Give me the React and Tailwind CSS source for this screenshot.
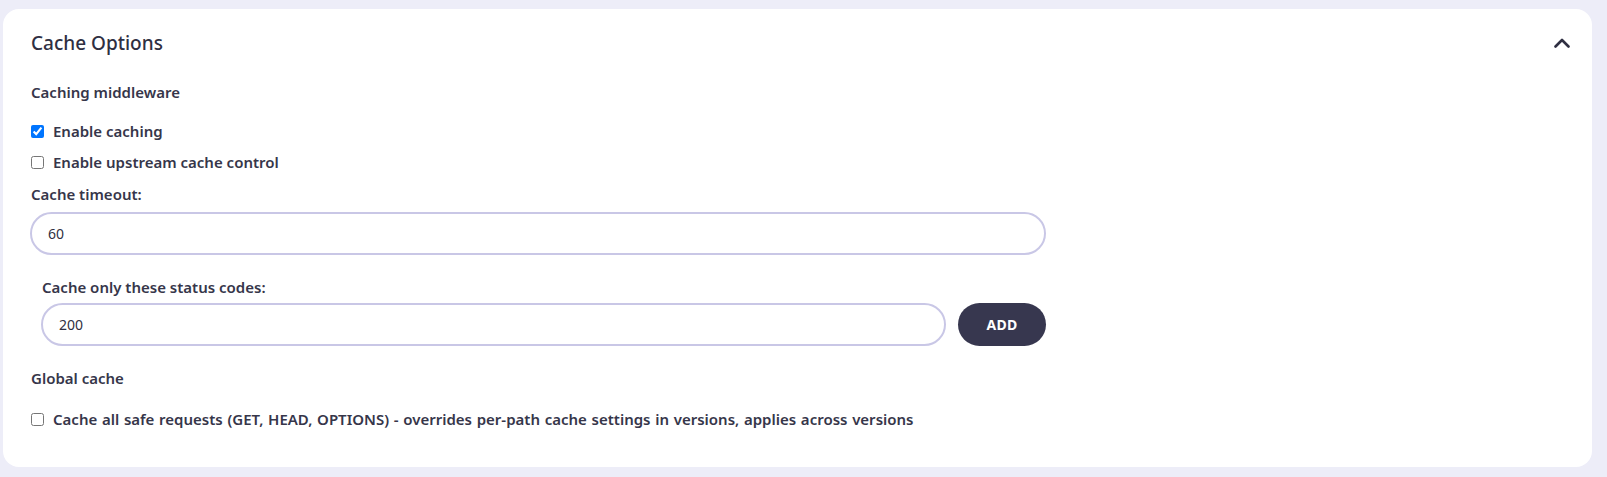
import React, { useState } from 'react'

const font = { fontFamily: '"Noto Sans", "Open Sans", sans-serif' }

const CheckRow = ({ checked, onChange, children, className = '' }) => (
  <label className={`flex items-center gap-[9px] h-[22px] text-[15px] leading-[22px] font-semibold text-[#36364a] ${className}`}>
    <input
      type="checkbox"
      checked={checked}
      onChange={onChange}
      className="w-[13px] h-[13px] m-0 shrink-0"
    />
    <span>{children}</span>
  </label>
)

const App = () => {
  const [caching, setCaching] = useState(true)
  const [upstream, setUpstream] = useState(false)
  const [globalCache, setGlobalCache] = useState(false)
  const [timeout, setTimeoutValue] = useState('60')
  const [status, setStatus] = useState('200')

  return (
    <div className="min-h-screen bg-[#ededf8] pt-[9px] pl-[3px] pr-[15px]" style={font}>
      <div className="bg-white rounded-2xl h-[458px] pt-[20px] pl-[28px] pr-[22px]">
        {/* Header */}
        <div className="flex items-center justify-between h-[28px]">
          <h2 className="text-[19px] leading-[28px] font-medium text-[#2f2f42]">Cache Options</h2>
          <svg width="16" height="10" viewBox="0 0 16 10">
            <path d="M1.5 8.5 8 2l6.5 6.5" fill="none" stroke="#2f2f42" strokeWidth="2.6" strokeLinecap="round" strokeLinejoin="round" />
          </svg>
        </div>

        <div className="w-[1016px] -ml-[1px]">
          <p className="mt-[24px] pl-[1px] text-[15px] leading-[22px] font-semibold text-[#36364a]">Caching middleware</p>

          <div className="mt-[17px] pl-[1px] flex flex-col gap-[9px]">
            <CheckRow checked={caching} onChange={() => setCaching(!caching)}>Enable caching</CheckRow>
            <CheckRow checked={upstream} onChange={() => setUpstream(!upstream)}>Enable upstream cache control</CheckRow>
          </div>

          <p className="mt-[10px] pl-[1px] text-[15px] leading-[22px] font-semibold text-[#36364a]">Cache timeout:</p>
          <input
            value={timeout}
            onChange={(e) => setTimeoutValue(e.target.value)}
            className="mt-[7px] w-full h-[43px] rounded-full border-2 border-[#c9c7e6] px-4 text-[14px] text-[#2f2f42] outline-none"
          />

          {/* Status codes */}
          <div className="pl-[11px] mt-[21px]">
            <p className="text-[15px] leading-[22px] font-semibold text-[#36364a] pl-[1px]">Cache only these status codes:</p>
            <div className="flex gap-3 mt-[5px]">
              <input
                value={status}
                onChange={(e) => setStatus(e.target.value)}
                className="flex-1 h-[43px] rounded-full border-2 border-[#c9c7e6] px-4 text-[14px] text-[#2f2f42] outline-none"
              />
              <button className="w-[88px] h-[43px] rounded-full bg-[#37374f] text-white text-[14px] font-bold tracking-wide">
                ADD
              </button>
            </div>
          </div>

          <p className="mt-[21px] pl-[1px] text-[15px] leading-[22px] font-semibold text-[#36364a]">Global cache</p>
          <div className="mt-[19px] pl-[1px]">
            <CheckRow
              checked={globalCache}
              onChange={() => setGlobalCache(!globalCache)}
              className="[word-spacing:0.8px]"
            >
              Cache all safe requests (GET, HEAD, OPTIONS) - overrides per-path cache settings in versions, applies across versions
            </CheckRow>
          </div>
        </div>
      </div>
    </div>
  )
}

export default App
